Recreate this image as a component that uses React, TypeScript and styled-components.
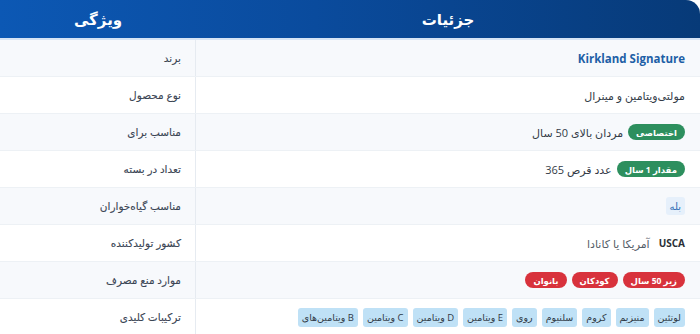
import styled, { createGlobalStyle } from "styled-components";

const GlobalStyle = createGlobalStyle`
  body {
    margin: 0;
    background: #ffffff;
    font-family: "Open Sans", "DejaVu Sans", sans-serif;
  }
`;

// Tabla principal de especificaciones
const SpecTable = styled.div`
  width: 700px;
  display: flex;
  flex-direction: column;
  border-top-right-radius: 14px;
  overflow: hidden;
`;

const HeadRow = styled.div`
  display: grid;
  grid-template-columns: 196px 1fr;
  background: linear-gradient(to right, #0c58b4 0%, #0a4b9d 45%, #073a78 100%);
  border-bottom: 2px solid #d6e4f5;
`;

const HeadCell = styled.div`
  height: 38px;
  display: flex;
  align-items: center;
  justify-content: center;
  color: #ffffff;
  font-size: 15px;
  font-weight: 700;
  direction: rtl;
`;

const Row = styled.div<{ $alt?: boolean }>`
  display: grid;
  grid-template-columns: 196px 1fr;
  min-height: 36px;
  background: ${(p) => (p.$alt ? "#f7f9fc" : "#ffffff")};
  border-bottom: 1px solid #edf1f5;
`;

const LabelCell = styled.div`
  direction: rtl;
  display: flex;
  align-items: center;
  padding: 0 14px;
  font-size: 10.5px;
  font-weight: 400;
  color: #3a4554;
  -webkit-text-stroke: 0.1px #3a4554;
  border-right: 1px solid #e6ebf1;
`;

const ValueCell = styled.div`
  direction: rtl;
  display: flex;
  align-items: center;
  flex-wrap: wrap;
  gap: 5px;
  padding: 0 15px;
  font-size: 11px;
  color: #333b47;
`;

const Brand = styled.span`
  font-weight: 700;
  color: #1d5fa6;
  font-size: 11.5px;
`;

const Pill = styled.span<{ $tone: "green" | "red" }>`
  display: inline-flex;
  align-items: center;
  height: 16px;
  padding: 0 8px;
  border-radius: 9px;
  font-size: 8.5px;
  font-weight: 700;
  color: #ffffff;
  background: ${(p) => (p.$tone === "green" ? "#2d8f5e" : "#d8323c")};
`;

const Yes = styled.span`
  display: inline-flex;
  align-items: center;
  height: 18px;
  padding: 0 4px;
  border-radius: 3px;
  background: #e6f0fb;
  color: #2d6db5;
  font-size: 10px;
`;

const Code = styled.span`
  font-weight: 700;
  font-size: 10px;
  color: #2a2f36;
  margin-left: 4px;
`;

const Muted = styled.span`
  color: #555d68;
`;

const Chip = styled.span`
  display: inline-flex;
  align-items: center;
  height: 19px;
  padding: 0 4px;
  border-radius: 3px;
  background: #bfe1f6;
  color: #2f3a46;
  font-size: 9.5px;
`;

const ingredients = [
  "لوتئین",
  "منیزیم",
  "کروم",
  "سلنیوم",
  "روی",
  "E ویتامین",
  "D ویتامین",
  "C ویتامین",
  "B ویتامین‌های",
];

export default function App() {
  return (
    <>
      <GlobalStyle />
      <SpecTable>
        <HeadRow>
          <HeadCell>ویژگی</HeadCell>
          <HeadCell>جزئیات</HeadCell>
        </HeadRow>

        <Row $alt>
          <LabelCell>برند</LabelCell>
          <ValueCell>
            <Brand>Kirkland Signature</Brand>
          </ValueCell>
        </Row>

        <Row>
          <LabelCell>نوع محصول</LabelCell>
          <ValueCell>مولتی‌ویتامین و مینرال</ValueCell>
        </Row>

        <Row $alt>
          <LabelCell>مناسب برای</LabelCell>
          <ValueCell>
            <Pill $tone="green">اختصاصی</Pill>
            <span>مردان بالای 50 سال</span>
          </ValueCell>
        </Row>

        <Row>
          <LabelCell>تعداد در بسته</LabelCell>
          <ValueCell>
            <Pill $tone="green">مقدار 1 سال</Pill>
            <span>عدد قرص 365</span>
          </ValueCell>
        </Row>

        <Row $alt>
          <LabelCell>مناسب گیاه‌خواران</LabelCell>
          <ValueCell>
            <Yes>بله</Yes>
          </ValueCell>
        </Row>

        <Row>
          <LabelCell>کشور تولیدکننده</LabelCell>
          <ValueCell>
            <Code>USCA</Code>
            <Muted>آمریکا یا کانادا</Muted>
          </ValueCell>
        </Row>

        <Row $alt>
          <LabelCell>موارد منع مصرف</LabelCell>
          <ValueCell>
            <Pill $tone="red">زیر 50 سال</Pill>
            <Pill $tone="red">کودکان</Pill>
            <Pill $tone="red">بانوان</Pill>
          </ValueCell>
        </Row>

        <Row>
          <LabelCell>ترکیبات کلیدی</LabelCell>
          <ValueCell>
            {ingredients.map((item) => (
              <Chip key={item}>{item}</Chip>
            ))}
          </ValueCell>
        </Row>
      </SpecTable>
    </>
  );
}
